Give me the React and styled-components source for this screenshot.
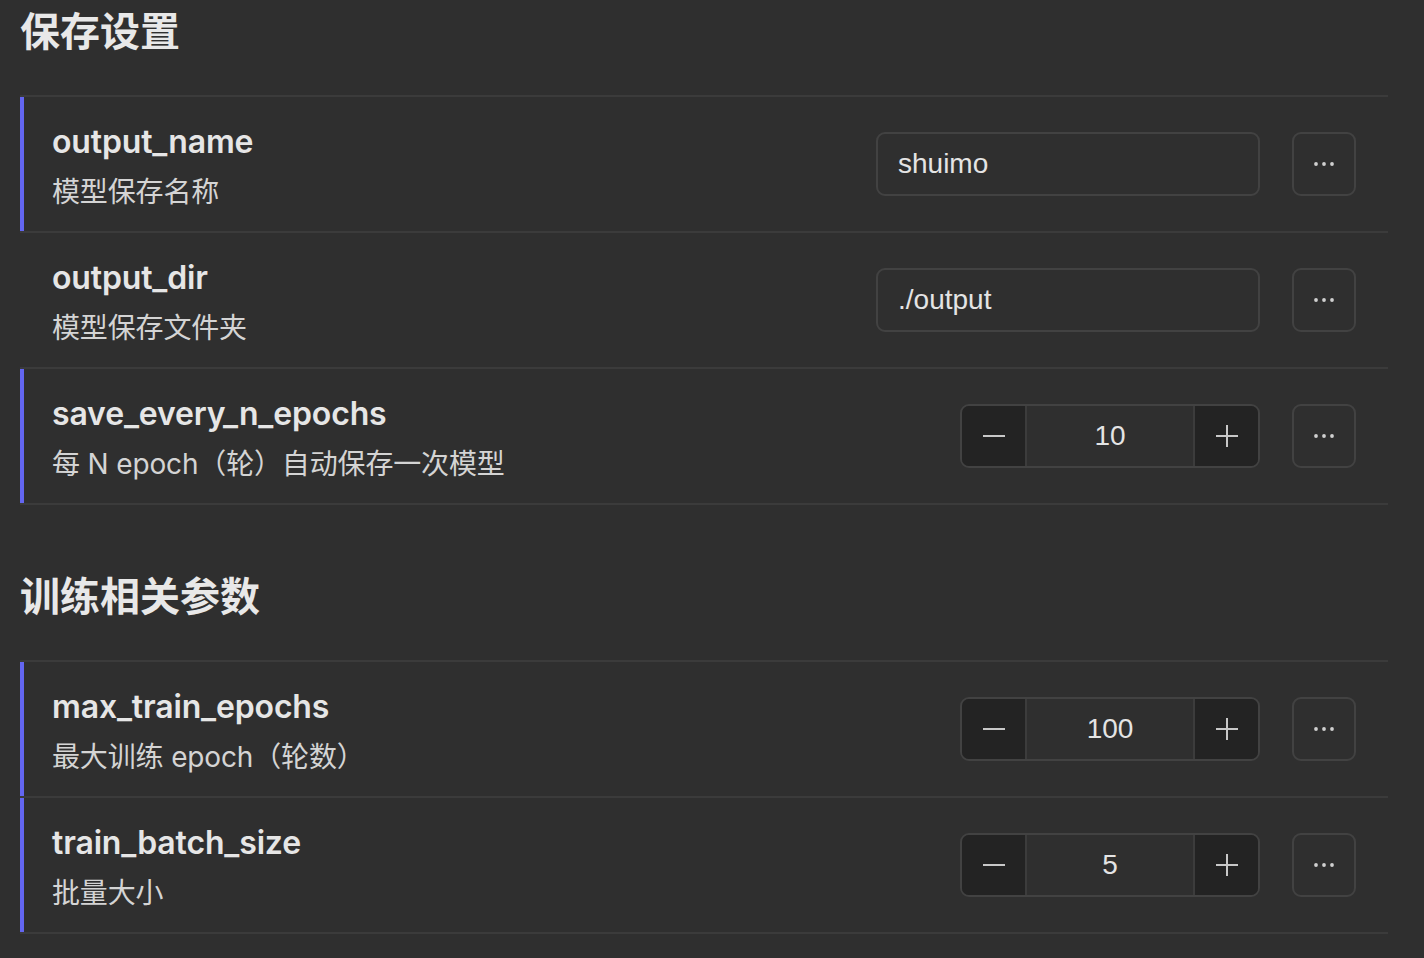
import React from "react";
import styled, { createGlobalStyle } from "styled-components";

const GlobalStyle = createGlobalStyle`
  html, body {
    margin: 0;
    padding: 0;
    background: #2f2f2f;
  }
  body {
    font-family: Inter, "Noto Sans CJK SC", sans-serif;
    color: #e6e6e6;
  }
  * { box-sizing: border-box; }
`;

const Page = styled.div`
  padding: 8px 36px 0 20px;
  width: 1424px;
`;

const Section = styled.section`
  margin-bottom: 68px;
  &:last-child { margin-bottom: 0; }
`;

const Heading = styled.h2`
  margin: 0 0 39px 0;
  font-family: Inter, "Noto Sans CJK SC", sans-serif;
  font-size: 40px;
  line-height: 48px;
  font-weight: 600;
  color: #e8e8e8;
`;

const List = styled.div`
  border-top: 2px solid #3b3b3b;
`;

const Row = styled.div`
  display: flex;
  align-items: center;
  height: 136px;
  padding: 0 32px 0 32px;
  border-bottom: 2px solid #3b3b3b;
  box-shadow: ${(p) => (p.$accent ? "inset 4px 0 0 #6366f1" : "none")};
`;

const Info = styled.div`
  flex: 1;
  display: flex;
  flex-direction: column;
  gap: 10px;
  padding-top: 6px;
`;

const Label = styled.div`
  font-family: Inter, "Noto Sans CJK SC", sans-serif;
  font-size: 32px;
  line-height: 40px;
  font-weight: 600;
  letter-spacing: -0.15px;
  color: #e6e6e6;
`;

const Desc = styled.div`
  font-family: Inter, "Noto Sans CJK SC", sans-serif;
  font-size: 28px;
  line-height: 40px;
  font-weight: 400;
  letter-spacing: -0.15px;
  color: #d4d4d4;
`;

const Controls = styled.div`
  display: flex;
  align-items: center;
  gap: 32px;
`;

const TextInput = styled.input`
  width: 384px;
  height: 64px;
  padding: 0 20px;
  background: transparent;
  border: 2px solid #424242;
  border-radius: 9px;
  color: #e4e4e4;
  font-family: "Liberation Sans", Arial, sans-serif;
  font-size: 28px;
  outline: none;
`;

const Stepper = styled.div`
  display: flex;
  width: 300px;
  height: 64px;
  border: 2px solid #424242;
  border-radius: 9px;
  overflow: hidden;
`;

const StepButton = styled.button`
  width: 65px;
  flex: none;
  display: flex;
  align-items: center;
  justify-content: center;
  padding: 0;
  border: none;
  background: #232323;
  ${(p) => (p.$side === "left" ? "border-right: 2px solid #3c3c3c;" : "border-left: 2px solid #3c3c3c;")}
  color: #c8c8c8;
`;

const StepValue = styled.div`
  flex: 1;
  display: flex;
  align-items: center;
  justify-content: center;
  font-family: "Liberation Sans", Arial, sans-serif;
  font-size: 28px;
  color: #e4e4e4;
`;

const MoreButton = styled.button`
  width: 64px;
  height: 64px;
  display: flex;
  align-items: center;
  justify-content: center;
  padding: 0;
  background: transparent;
  border: 2px solid #424242;
  border-radius: 9px;
  color: #d0d0d0;
`;

const Minus = () => (
  <svg width="22" height="22" viewBox="0 0 22 22">
    <rect x="0" y="10" width="22" height="2" fill="currentColor" />
  </svg>
);

const Plus = () => (
  <svg width="22" height="22" viewBox="0 0 22 22">
    <rect x="0" y="10" width="22" height="2" fill="currentColor" />
    <rect x="10" y="0" width="2" height="22" fill="currentColor" />
  </svg>
);

const Dots = () => (
  <svg width="22" height="6" viewBox="0 0 22 6">
    <circle cx="3" cy="3" r="1.9" fill="currentColor" />
    <circle cx="11" cy="3" r="1.9" fill="currentColor" />
    <circle cx="19" cy="3" r="1.9" fill="currentColor" />
  </svg>
);

const sections = [
  {
    title: "保存设置",
    rows: [
      { name: "output_name", desc: "模型保存名称", type: "text", value: "shuimo", accent: true },
      { name: "output_dir", desc: "模型保存文件夹", type: "text", value: "./output", accent: false },
      { name: "save_every_n_epochs", desc: "每 N epoch（轮）自动保存一次模型", type: "number", value: "10", accent: true },
    ],
  },
  {
    title: "训练相关参数",
    rows: [
      { name: "max_train_epochs", desc: "最大训练 epoch（轮数）", type: "number", value: "100", accent: true },
      { name: "train_batch_size", desc: "批量大小", type: "number", value: "5", accent: true },
    ],
  },
];

export default function App() {
  return (
    <>
      <GlobalStyle />
      <Page>
        {sections.map((s) => (
          <Section key={s.title}>
            <Heading>{s.title}</Heading>
            <List>
              {s.rows.map((r) => (
                <Row key={r.name} $accent={r.accent}>
                  <Info>
                    <Label>{r.name}</Label>
                    <Desc>{r.desc}</Desc>
                  </Info>
                  <Controls>
                    {r.type === "text" ? (
                      <TextInput defaultValue={r.value} />
                    ) : (
                      <Stepper>
                        <StepButton $side="left"><Minus /></StepButton>
                        <StepValue>{r.value}</StepValue>
                        <StepButton $side="right"><Plus /></StepButton>
                      </Stepper>
                    )}
                    <MoreButton><Dots /></MoreButton>
                  </Controls>
                </Row>
              ))}
            </List>
          </Section>
        ))}
      </Page>
    </>
  );
}
